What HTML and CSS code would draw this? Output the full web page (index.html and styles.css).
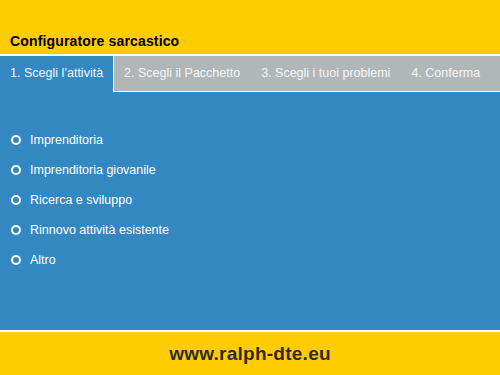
FILE: index.html
```html
<!DOCTYPE html>
<html lang="it">
<head>
  <meta charset="UTF-8">
  <title>Configuratore sarcastico</title>
  <link rel="stylesheet" href="styles.css">
</head>
<body>
  <div class="header">
    <h1>Configuratore sarcastico</h1>
  </div>

  <!-- passi del configuratore -->
  <div class="tabs">
    <div class="tab active">1. Scegli l’attività</div>
    <div class="tab">2. Scegli il Pacchetto</div>
    <div class="tab">3. Scegli i tuoi problemi</div>
    <div class="tab">4. Conferma</div>
  </div>

  <div class="content">
    <ul class="options">
      <li><span class="radio"></span>Imprenditoria</li>
      <li><span class="radio"></span>Imprenditoria giovanile</li>
      <li><span class="radio"></span>Ricerca e sviluppo</li>
      <li><span class="radio"></span>Rinnovo attività esistente</li>
      <li><span class="radio"></span>Altro</li>
    </ul>
  </div>

  <div class="footer">www.ralph-dte.eu</div>
</body>
</html>
```

FILE: styles.css
```css
* {
  box-sizing: border-box;
}

body {
  margin: 0;
  padding: 0;
  font-family: 'Liberation Sans', Arial, sans-serif;
  background-color: #fff;
  height: 375px;
  display: flex;
  flex-direction: column;
}

.header {
  height: 56px;
  background-color: #ffcc00;
  border-bottom: 2px solid #fff;
  display: flex;
  align-items: flex-end;
  padding: 0 10px 6px;
}

h1 {
  margin: 0;
  font-size: 14px;
  letter-spacing: 0.15px;
  font-weight: bold;
  color: #000;
  line-height: 14px;
}

.tabs {
  display: flex;
  height: 36px;
  background-color: #b1b6b9;
  border-bottom: 1px solid #fff;
}

.tab {
  height: 35px;
  line-height: 35px;
  padding: 0 10px;
  font-size: 12.5px;
  color: #f4f6f7;
  margin-right: 1px;
}

.tab.active {
  background-color: #3388c2;
  height: 36px;
  margin-bottom: -1px;
  border-right: 1px solid #fff;
  margin-right: 0;
}

.content {
  flex: 1;
  background-color: #3388c2;
  border-bottom: 2px solid #fff;
}

.options {
  list-style: none;
  margin: 0;
  padding: 33px 0 0 11px;
}

.options li {
  display: flex;
  align-items: center;
  height: 30px;
  font-size: 12.5px;
  color: #fff;
}

.radio {
  width: 10px;
  height: 10px;
  border: 2px solid #fff;
  border-radius: 50%;
  margin-right: 9px;
}

.footer {
  height: 43px;
  background-color: #ffcc00;
  text-align: center;
  line-height: 43px;
  font-size: 19px;
  letter-spacing: 0.25px;
  font-weight: bold;
  color: #2b2b2b;
}
```
